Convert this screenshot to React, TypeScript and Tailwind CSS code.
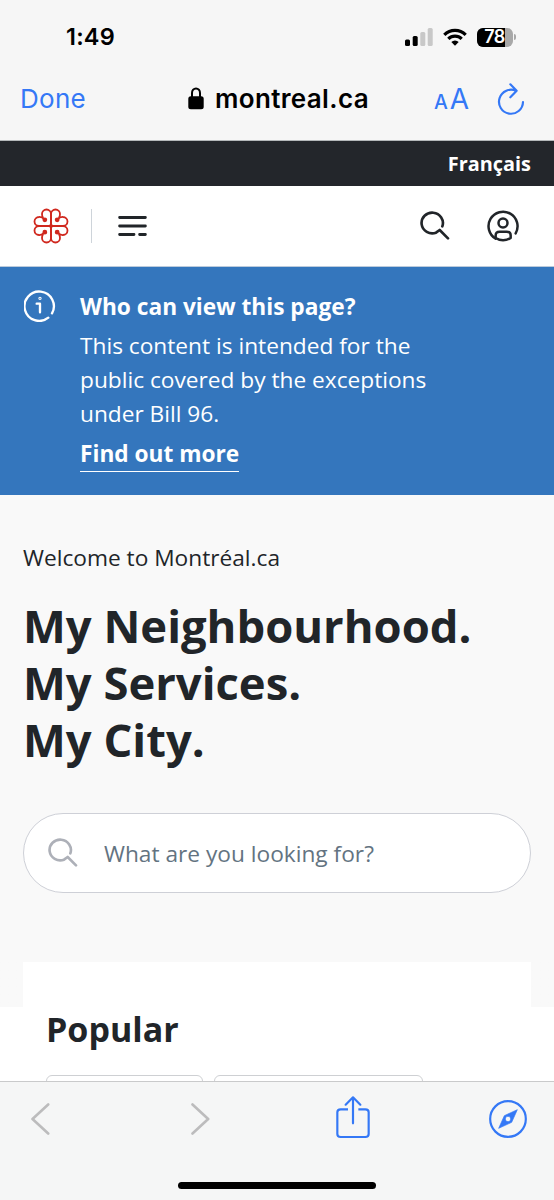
import React from 'react';

const petals = "M0 0 V-36 A13.5 13.5 0 0 0 -27 -36 Q-27 -30 -24 -25 M0 0 H-36 A13.5 13.5 0 0 1 -36 -27 Q-28 -28 -19 -19"

function Logo() {
  return (
    <svg className="h-9 w-9 shrink-0" viewBox="-54 -54 108 108" fill="none" stroke="#d0281e" strokeWidth="5.4" strokeLinecap="round">
      {["", "scale(-1 1)", "scale(1 -1)", "scale(-1 -1)"].map((t) => (
        <g key={t} transform={t}>
          <path d={petals} />
          <circle cx="-18.5" cy="-18.5" r="4.5" fill="#d0281e" />
        </g>
      ))}
      <circle r="3" fill="#d0281e" />
    </svg>
  )
}

function SearchIcon({ className }: { className: string }) {
  return (
    <svg className={className} viewBox="0 0 96 96" fill="none" stroke="currentColor" strokeWidth="8" strokeLinecap="round" strokeLinejoin="round">
      <path d="M67 49 A32 31 0 1 0 48 68 L59 60 L84 85" />
    </svg>
  )
}

function UserIcon() {
  return (
    <svg className="h-8 w-8" viewBox="0 0 96 96" fill="none" stroke="currentColor" strokeWidth="7.5" strokeLinecap="round" strokeLinejoin="round">
      <path d="M86 70 A43.5 43.5 0 1 0 26 86" />
      <circle cx="48" cy="39" r="13.5" />
      <path d="M26 84 V76 Q26 65 38 65 H59 Q71 65 71 76 V84 Q48 98 26 84" />
    </svg>
  )
}

function InfoIcon() {
  return (
    <svg className="h-8 w-8" viewBox="0 0 96 96" fill="none" stroke="currentColor" strokeWidth="7" strokeLinecap="round" strokeLinejoin="round">
      <path d="M84 70 A44 44 0 1 0 73 83" />
      <path d="M38 41 H48 V67" />
      <circle cx="48" cy="25" r="1.5" />
    </svg>
  )
}

function StatusBar() {
  return (
    <div className="flex h-[74px] items-center justify-between pr-[38px] pl-[66px]">
      <span className="text-[23.5px] font-semibold tracking-[0.2px] text-black">1:49</span>
      <div className="flex items-center">
        <svg className="h-[18px] w-7" viewBox="0 0 28 18">
          <rect x="0" y="11.5" width="5" height="6.5" rx="1.5" />
          <rect x="7.7" y="8" width="5" height="10" rx="1.5" />
          <rect x="15.3" y="4" width="5" height="14" rx="1.5" fill="#c8c8c8" />
          <rect x="22.7" y="0" width="5" height="18" rx="1.5" fill="#c8c8c8" />
        </svg>
        <svg className="ml-[10px] h-[18px] w-6" viewBox="0 0 24 18" fill="none" stroke="#000" strokeWidth="3.2">
          <path d="M1.3 6.8 A15.2 15.2 0 0 1 22.7 6.8" />
          <path d="M5.3 10.8 A9.5 9.5 0 0 1 18.7 10.8" />
          <path d="M8.3 14 A5.3 5.3 0 0 1 15.7 14 L12 17.8 Z" fill="#000" stroke="none" />
        </svg>
        <div className="ml-[10px] flex h-[19px] w-9 overflow-hidden rounded-[6px] bg-[#a8a8a8]">
          <div className="flex w-7 items-center justify-end bg-black text-[18px] leading-none font-semibold tracking-[-0.4px] text-white">78</div>
        </div>
        <div className="ml-px h-[6px] w-[2px] rounded-r-full bg-[#a8a8a8]" />
      </div>
    </div>
  )
}

function AddressBar() {
  return (
    <div className="flex h-[66px] items-center pb-[17px] pl-5">
      <span className="w-[168px] text-[26px] tracking-[0.3px] text-[#3478f6]">Done</span>
      <svg className="h-[23px] w-4" viewBox="0 0 16 23">
        <path d="M4 10 V6 A4 4.6 0 0 1 12 6 V10" fill="none" stroke="#000" strokeWidth="2" />
        <rect x="0.3" y="9.3" width="15.4" height="13" rx="2.5" />
      </svg>
      <span className="ml-[11px] w-[219px] text-[26px] font-semibold tracking-[0.35px] text-black">montreal.ca</span>
      <span className="flex w-[63px] items-baseline text-[#3478f6]">
        <span className="text-[19.5px] font-medium">A</span>
        <span className="ml-[2px] text-[28px]">A</span>
      </span>
      <svg className="h-8 w-7" viewBox="0 0 84 96" fill="none" stroke="#3478f6" strokeWidth="6.5" strokeLinecap="round" strokeLinejoin="round">
        <path d="M78 57 A36 36 0 1 1 58 24 M40 4 L59 23 L40 43" />
      </svg>
    </div>
  )
}

function BottomBar() {
  return (
    <div className="flex h-[119px] flex-col border-t border-[#c9cacb] bg-[#f5f6f6]">
      <div className="flex h-[73px] items-center pl-[31px] text-[#3478f6]">
        <svg className="h-8 w-[19px]" viewBox="0 0 19 32" fill="none" stroke="#bcbcbd" strokeWidth="2.6" strokeLinecap="round" strokeLinejoin="round">
          <path d="M17.2 1.5 L1.5 16 L17.2 30.5" />
        </svg>
        <svg className="ml-[141px] h-8 w-[19px]" viewBox="0 0 19 32" fill="none" stroke="#bcbcbd" strokeWidth="2.6" strokeLinecap="round" strokeLinejoin="round">
          <path d="M1.5 1.5 L17.2 16 L1.5 30.5" />
        </svg>
        <svg className="mb-[2px] ml-[126px] h-[43px] w-[34px]" viewBox="0 0 102 129" fill="none" stroke="currentColor" strokeWidth="6.5" strokeLinecap="round" strokeLinejoin="round">
          <path d="M51 82 V5 M29 26 L51 4 L73 26" />
          <path strokeLinecap="butt" d="M36 40 H14 Q4 40 4 49 V114 Q4 123 14 123 H88 Q98 123 98 114 V49 Q98 40 88 40 H67" />
        </svg>
        <svg className="ml-[119px] h-[38px] w-[38px]" viewBox="0 0 114 114">
          <circle cx="57" cy="57" r="53.5" fill="none" stroke="currentColor" strokeWidth="6.5" />
          <path fill="currentColor" fillRule="evenodd" stroke="currentColor" strokeWidth="2" strokeLinejoin="round" d="M85 29 L68 67 L29 85 L46 47 Z M57 49 a8 8 0 1 0 0.1 0 Z" />
        </svg>
      </div>
      <div className="mx-auto mt-[27px] h-[7px] w-[198px] rounded-full bg-black" />
    </div>
  )
}

export default function App() {
  return (
    <div className="flex h-[1200px] w-[554px] flex-col overflow-hidden bg-white font-['Open_Sans',sans-serif] text-[#212529]">
      <div className="h-[141px] shrink-0 border-b border-[#b4b8ba] bg-[#f6f6f6] font-[Inter,sans-serif]">
        <StatusBar />
        <AddressBar />
      </div>

      <div className="flex h-[45px] shrink-0 items-center justify-end bg-[#23262b] pr-[23px]">
        <a href="#" className="text-[19.9px] font-bold text-white">Français</a>
      </div>

      <header className="flex h-[81px] shrink-0 items-center border-b border-[#bccbdc] pr-[35px] pl-[33px]">
        <Logo />
        <div className="ml-[22px] h-[34px] w-px bg-[#ced4da]" />
        <svg className="ml-[26px] h-[22px] w-[29px]" viewBox="0 0 29 22" fill="none" stroke="currentColor" strokeWidth="2.8" strokeLinecap="round">
          <path d="M1.6 2.5 H27.4 M1.6 11 H27.4 M1.6 19.5 H16 M21.6 19.5 H27.4" />
        </svg>
        <SearchIcon className="ml-auto h-8 w-8" />
        <div className="ml-[35px]">
          <UserIcon />
        </div>
      </header>

      <section className="flex h-[228px] shrink-0 bg-[#3476bd] pt-[23px] pl-6 text-white">
        <InfoIcon />
        <div className="ml-6 text-[22.7px] leading-[34px]">
          <h2 className="font-bold">Who can view this page?</h2>
          <p className="mt-[5px]">
            This content is intended for the<br />
            public covered by the exceptions<br />
            under Bill 96.
          </p>
          <a href="#" className="mt-[6px] inline-block border-b border-white pb-px leading-[33px] font-bold">Find out more</a>
        </div>
      </section>

      <main className="min-h-0 flex-1 overflow-hidden">
        <div className="h-[467px] bg-[#f9f9f9] px-[23px] pt-[46px]">
          <p className="text-[22.7px] leading-[34px]">Welcome to Montréal.ca</p>
          <h1 className="mt-[22px] text-[45.4px] leading-[57px] font-bold">
            My Neighbourhood.<br />
            My Services.<br />
            My City.
          </h1>
          <div className="mt-[45px] flex h-20 items-center rounded-full border border-[#ced0d7] bg-white pl-6">
            <SearchIcon className="h-8 w-8 text-[#adb0b8]" />
            <input
              type="text"
              placeholder="What are you looking for?"
              className="ml-6 w-[380px] pt-[2px] text-[22.7px] outline-none placeholder:text-[#637381]"
            />
          </div>
        </div>
        <div className="bg-linear-to-b from-[#f9f9f9] from-[45px] to-white to-[45px] px-[23px]">
          <div className="h-[300px] bg-white px-[23px] pt-[45px]">
            <h2 className="text-[34px] leading-[45px] font-bold">Popular</h2>
            <div className="mt-[23px] flex gap-[11px]">
              <div className="h-12 w-[157px] rounded-[6px] border border-[#ced0d3]" />
              <div className="h-12 w-[209px] rounded-[6px] border border-[#ced0d3]" />
            </div>
          </div>
        </div>
      </main>

      <BottomBar />
    </div>
  )
}
